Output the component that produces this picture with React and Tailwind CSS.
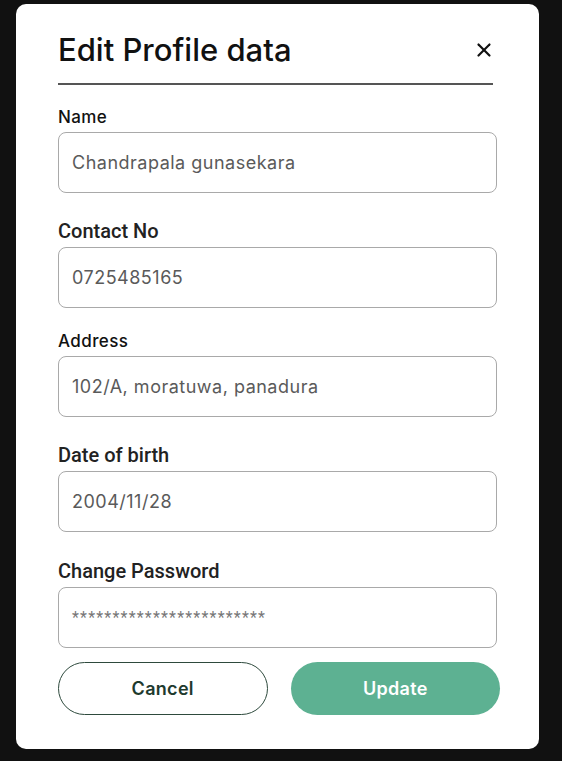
import React from 'react';
import { X } from 'lucide-react';

const fields = [
  { label: 'Name', value: 'Chandrapala gunasekara', alt: false, gap: 'mt-[20px]' },
  { label: 'Contact No', value: '0725485165', alt: true, gap: 'mt-[25px]' },
  { label: 'Address', value: '102/A, moratuwa, panadura', alt: false, gap: 'mt-[21px]' },
  { label: 'Date of birth', value: '2004/11/28', alt: true, gap: 'mt-[25px]' },
  { label: 'Change Password', value: '************************', alt: true, pw: true, gap: 'mt-[26px]' },
];

const Field = ({ label, value, alt, pw, gap }) => (
  <div className={gap}>
    <p
      className={
        alt
          ? "font-['Roboto',sans-serif] text-[20px] leading-[26px] font-medium text-[#222]"
          : "font-['Inter',sans-serif] text-[17px] leading-[24px] tracking-[0.4px] font-medium text-[#111]"
      }
    >
      {label}
    </p>
    <div className="mt-[3px] h-[61px] border border-[#a9a9a9] rounded-lg flex items-center px-[13px]">
      <span
        className={
          pw
            ? "font-['Roboto',sans-serif] text-[16px] tracking-[1.2px] text-[#777]"
            : "font-['Inter',sans-serif] text-[18px] tracking-[0.5px] text-[#5a5a5a]"
        }
      >
        {value}
      </span>
    </div>
  </div>
);

export default function App() {
  return (
    <div className="min-h-screen bg-[#111111] px-[16px] pt-[4px] pb-[13px] font-['Inter',sans-serif]">
      <div className="w-[523px] bg-white rounded-[10px] pt-[28px] pb-[34px] px-[42px]">
        <div className="flex items-center justify-between">
          <h2 className="text-[31px] leading-[36px] font-medium text-[#111]">Edit Profile data</h2>
          <X className="w-[22px] h-[22px] text-[#111] mr-[2px]" strokeWidth={2.4} />
        </div>
        <div className="mt-[15px] h-[2px] w-[435px] bg-[#555]" />
        {fields.map((f) => (
          <Field key={f.label} {...f} />
        ))}
        <div className="mt-[14px] flex gap-[23px] w-[442px]">
          <button className="w-[210px] h-[53px] rounded-full border border-[#2e4a3d] text-[#1e3a2e] text-[18px] tracking-[0.3px] font-semibold">
            Cancel
          </button>
          <button className="w-[210px] h-[53px] rounded-full bg-[#5db192] text-white text-[18px] tracking-[0.3px] font-semibold">
            Update
          </button>
        </div>
      </div>
    </div>
  );
}
